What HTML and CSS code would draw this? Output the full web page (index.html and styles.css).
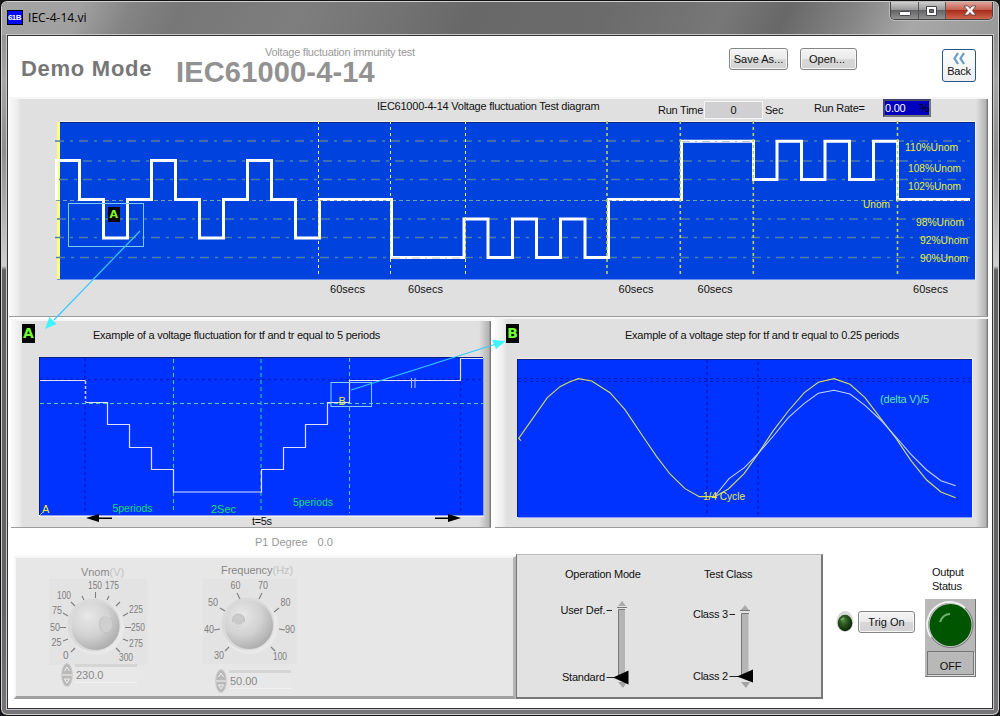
FILE: index.html
```html
<!DOCTYPE html>
<html lang="en">
<head>
<meta charset="utf-8">
<title>IEC-4-14.vi</title>
<link rel="stylesheet" href="styles.css">
</head>
<body>
<div class="window">
  <header class="titlebar">
    <span class="app-icon">61B</span>
    <span class="app-title">IEC-4-14.vi</span>
    <div class="window-buttons">
      <span class="wbtn"><svg width="28" height="18"><rect x="8.500" y="9.500" width="11" height="4" rx="1" fill="#fff" stroke="#454552"/></svg></span>
      <span class="wbtn restore"><svg width="26" height="18"><path d="M7.500 4.500h10v9h-10zM10.500 7.500h4v3h-4z" fill="#fff" stroke="#454552" fill-rule="evenodd"/></svg></span>
      <span class="wbtn close"><svg width="47" height="18"><path d="M18 4h4l2 2.500L26 4h4l-3.700 4.500L30 13h-4l-2-2.500L22 13h-4l3.700-4.500z" fill="#fff" stroke="#54434a" stroke-width=".8"/></svg></span>
    </div>
  </header>
  <main class="client">
    <section class="heading">
      <h1 class="demo">Demo Mode</h1>
      <div class="standard"><span class="subtitle">Voltage fluctuation immunity test</span><strong class="standard-name">IEC61000-4-14</strong></div>
      <button class="btn save">Save As...</button>
      <button class="btn open">Open...</button>
      <button class="back"><svg width="16" height="13"><path d="M7 1L3.500 6.500 7 12M13 1L9.500 6.500 13 12" fill="none" stroke="#6c9cca" stroke-width="2.300"/></svg><span>Back</span></button>
    </section>

    <section class="panel overview">
      <div class="overview-head">
        <span class="ov-title">IEC61000-4-14 Voltage fluctuation Test diagram</span>
        <span class="run-label">Run Time</span><span class="run-time">0</span><span class="sec">Sec</span>
        <span class="rate-label">Run Rate=</span><span class="rate">0.00<span class="pct">%</span></span>
      </div>
      <svg class="overview-chart" viewBox="50 120 930 180" width="930" height="180">
        <rect x="60" y="121" width="916" height="159" fill="#f2f2df"/>
        <rect x="57" y="122" width="3" height="157" fill="#ffff7c"/>
        <rect x="60" y="122" width="915" height="157" fill="#0042de"/>
        <path d="M60 122.500H975" stroke="#00258c"/>
        <path d="M57 279.500H975" stroke="#6b8ff0"/>
        <g stroke="#4f7fa6" stroke-width="1.300" stroke-dasharray="9 6 3 6">
          <path d="M55 141H970M59 161H970M59 179.500H970M57 219H970M55 237.500H970M56 257.500H970"/>
          <path d="M56 200.500H970" stroke-dasharray="4 3" stroke="#7ba39a" stroke-width="1"/>
        </g>
        <path class="wave" d="M56.500 200V160.500H79.500V199.500H103.500V238H127.500V199.500H151.500V160.500H175.500V199.500H199.500V238H223.500V199.500H247.500V160.500H271.500V199.500H295.500V238H319.500V199.500H391.500V257.500H464V219H488V257.500H512.500V219H536.500V257.500H560.500V219H585V257.500H608.500V199.500H681.500V141.300H753.500V179.500H777V141.300H801.500V179.500H825V141.300H849.500V179.500H873.500V141.300H897.500V199.500H970"/>
        <path d="M320 200.500H391M609 200.500H681M898 200.500H969" stroke="#9caea6" stroke-dasharray="3 4"/>
        <path d="M392 258H464M682 141.500H753" stroke="#b9c3c3" stroke-dasharray="8 5 2 5"/>
        <g stroke="#e8f04a" stroke-dasharray="3 3"><path d="M318.500 121V275M390.500 121V275M465.500 121V275"/><path d="M607 121V275M680.300 121V275M753.300 121V275M897.500 121V275" stroke="#c0d05c" stroke-width="1.600"/></g>
        <rect x="68.500" y="203.500" width="75" height="43" fill="none" stroke="#79cdf0"/>
        <rect x="108" y="207" width="12" height="15" fill="#000"/>
        <text x="109.500" y="218" class="marker">A</text>
        <g class="yellow">
          <text x="905" y="151" textLength="53" lengthAdjust="spacingAndGlyphs">110%Unom</text><text x="908" y="172" textLength="53" lengthAdjust="spacingAndGlyphs">108%Unom</text><text x="908" y="190" textLength="53" lengthAdjust="spacingAndGlyphs">102%Unom</text>
          <text x="863" y="208" textLength="27" lengthAdjust="spacingAndGlyphs">Unom</text>
          <text x="916" y="226" textLength="48" lengthAdjust="spacingAndGlyphs">98%Unom</text><text x="920" y="244" textLength="48" lengthAdjust="spacingAndGlyphs">92%Unom</text><text x="920" y="262" textLength="48" lengthAdjust="spacingAndGlyphs">90%Unom</text>
        </g>
        <g><text x="330" y="293" textLength="35">60secs</text><text x="408" y="293" textLength="35">60secs</text><text x="618.500" y="293" textLength="35">60secs</text><text x="697.500" y="293" textLength="35">60secs</text><text x="913" y="293" textLength="35">60secs</text></g>
      </svg>
    </section>

    <div class="examples">
      <section class="panel example-a">
        <div class="ex-head"><b class="badge">A</b><span class="ex-title a">Example of a voltage fluctuation for tf and tr equal to 5 periods</span></div>
        <svg class="chart-a" viewBox="38 356 448 172" width="448" height="172">
          <rect x="39" y="357" width="445" height="160" fill="#f3f1e8"/>
          <rect x="39" y="357" width="444" height="158" fill="#0033ff"/>
          <path d="M39.500 515V357.500H483" fill="none" stroke="#001d8c"/>
          <path d="M40 515.500H483.500V358" fill="none" stroke="#8ba0ff"/>
          <g stroke="#001bc4" stroke-width="1.400" stroke-dasharray="3 3"><path d="M40 379.500H483M85 358V513M460.500 358V513"/></g>
          <g stroke="#24df82" stroke-dasharray="4 3"><path d="M173.500 359V513M261 359V513"/><path d="M40 403.500H483M349.500 358V513" stroke="#4ccfa5"/></g>
          <path d="M40 380.500H85.500M85.500 402.500H107.500V424.500H129.500V447.500H151.500V469.500H173.500V492H261.500V469.500H283.500V447.500H305.500V424.500H327.500V402.500H349.500V380.500H460.500V358.500H483" fill="none" stroke="#dce2ff" stroke-width="1.200"/>
          <path d="M85.500 381V402" stroke="#c4ceff" stroke-width="1.600" stroke-dasharray="3 2"/>
          <path d="M411.500 378V388M415 378V388" stroke="#b9c8ff"/>
          <rect x="331" y="382.500" width="40.500" height="24" fill="none" stroke="#83cdf1"/>
          <text x="338.500" y="405" class="yellow">B</text><text x="42" y="513" class="yellow">A</text><path d="M40 515l4-4" stroke="#b7bf65"/>
          <g class="green"><text x="112.500" y="512" textLength="40" lengthAdjust="spacingAndGlyphs">5periods</text><text x="211" y="513" textLength="25">2Sec</text><text x="293" y="506" textLength="40" lengthAdjust="spacingAndGlyphs">5periods</text></g>
          <text x="252" y="525" textLength="20">t=5s</text>
          <path d="M86 518l13-4v3.500h13v1.500H99v3zM461 518l-13-4v3.500h-13v1.500h13v3z" fill="#000"/>
        </svg>
      </section>
      <section class="panel example-b">
        <div class="ex-head"><b class="badge">B</b><span class="ex-title b">Example of a voltage step for tf and tr equal to 0.25 periods</span></div>
        <svg class="chart-b" viewBox="516 358 457 161" width="457" height="161">
          <rect x="517" y="358" width="456" height="160" fill="#f3f1e8"/>
          <rect x="517" y="359" width="455" height="158" fill="#0033ff"/>
          <path d="M517.500 517V359.500H972" fill="none" stroke="#001d8c"/><path d="M518 517.500H972" stroke="#8ba0ff"/>
          <g stroke="#001bc4" stroke-dasharray="3 3"><path d="M518 378.500H971M518 381.500H971"/><path d="M707 360V514M758 362V517" stroke-width="1.500"/></g>
          <g transform="translate(510 340) scale(.33333)" fill="none" stroke-width="3.300">
            <path d="M33 302L26 295 112 173 150 140 178 126 205 116 245 123 300 158 345 209 400 291 440 350 480 402 525 446 568 470 615 470 655 447 703 400 745 340 790 272 835 213 883 158 925 127 972 116 1020 133 1065 173 1112 235 1158 295 1203 362 1250 420 1293 456 1337 473" stroke="#d5e056"/>
            <path d="M615 468L657 416 703 383 745 340 790 288 835 233 883 190 925 160 972 151 1020 162 1065 196 1112 240 1158 291 1203 343 1250 390 1293 422 1337 437" stroke="#c5d2ff"/>
          </g>
          <text x="703" y="500" class="yellow" textLength="42" lengthAdjust="spacingAndGlyphs">1/4 Cycle</text>
          <text x="880" y="403" class="delta" textLength="49">(delta V)/5</text>
        </svg>
      </section>
    </div>

    <p class="degree"><span>P1 Degree</span><span>0.0</span></p>

    <div class="bottom">
      <section class="panel-raised source">
        <div class="dial-group vnom">
          <h2 class="dial-title">Vnom<span>(V)</span></h2>
          <svg viewBox="49 578 98 86" width="98" height="86">
            <defs><radialGradient id="knob" cx=".35" cy=".3" r=".75"><stop offset="0" stop-color="#e8e8e8"/><stop offset=".55" stop-color="#d2d2d2"/><stop offset="1" stop-color="#acacac"/></radialGradient></defs>
            <rect x="49" y="578" width="98" height="86" fill="#e3e3e3"/>
            <circle cx="96" cy="626" r="28" fill="#e9e9e9"/><circle cx="94" cy="624" r="26.500" fill="#dadada"/><circle cx="95.500" cy="625" r="24" fill="url(#knob)"/>
            <ellipse cx="106" cy="623" rx="6.500" ry="9" fill="#cfcfcf" stroke="#c1c1c1"/><path d="M101 616q5-4 9 0" stroke="#e2e2e2" fill="none"/>
            <path d="M75 647l-4 4M68 638l-5 2M66 626.500h-6M68 615l-5-3M75 605l-4-4M84 599l-2-4M95.500 597v-6M107 599l2-4M116 605l4-4M123 615l5-3M125 626.500h6M123 638l5 2M116 647l4 4" stroke="#7d7d7d" stroke-width="1.100"/>
            <g class="tick"><text x="63" y="658">0</text><text x="51.500" y="645" textLength="10" lengthAdjust="spacingAndGlyphs">25</text><text x="50" y="630" textLength="10" lengthAdjust="spacingAndGlyphs">50</text><text x="52" y="613" textLength="10" lengthAdjust="spacingAndGlyphs">75</text><text x="57" y="598" textLength="14" lengthAdjust="spacingAndGlyphs">100</text><text x="88" y="588" textLength="14" lengthAdjust="spacingAndGlyphs">150</text><text x="105" y="588" textLength="14" lengthAdjust="spacingAndGlyphs">175</text><text x="129" y="612" textLength="14" lengthAdjust="spacingAndGlyphs">225</text><text x="131" y="630" textLength="14" lengthAdjust="spacingAndGlyphs">250</text><text x="129" y="646" textLength="14" lengthAdjust="spacingAndGlyphs">275</text><text x="119" y="660" textLength="14" lengthAdjust="spacingAndGlyphs">300</text></g>
          </svg>
          <div class="number"><svg class="spin" width="12" height="24"><ellipse cx="6" cy="12" rx="5.300" ry="11.500" fill="#b9b9b9" stroke="#ccc"/><path d="M3.500 8l2.500-4 2.500 4M3.500 16l2.500 4 2.500-4zM1 12h10" fill="none" stroke="#f2f2f2"/></svg><span class="value">230.0</span></div>
        </div>
        <div class="dial-group freq">
          <h2 class="dial-title">Frequency<span>(Hz)</span></h2>
          <svg viewBox="203 579 94 85" width="94" height="85">
            <rect x="203" y="579" width="94" height="85" fill="#e3e3e3"/>
            <circle cx="250" cy="626" r="28" fill="#e9e9e9"/><circle cx="248" cy="624" r="26.500" fill="#dadada"/><circle cx="249" cy="625" r="24" fill="url(#knob)"/>
            <circle cx="238.500" cy="620" r="6" fill="#cacaca" stroke="#bebebe"/><path d="M233 622a6 6 0 0011 0" fill="none" stroke="#dedede" stroke-width="1.500"/>
            <path d="M229 647l-4 4M220 629l-6 1M225 611l-5-3M240 599l-3-6M259 599l3-6M274 612l5-4M279 629l6 1M271 647l4 4" stroke="#7d7d7d" stroke-width="1.100"/>
            <g class="tick"><text x="214" y="659" textLength="10" lengthAdjust="spacingAndGlyphs">30</text><text x="204" y="633" textLength="10" lengthAdjust="spacingAndGlyphs">40</text><text x="208" y="606" textLength="10" lengthAdjust="spacingAndGlyphs">50</text><text x="230.500" y="589" textLength="10" lengthAdjust="spacingAndGlyphs">60</text><text x="258" y="589" textLength="10" lengthAdjust="spacingAndGlyphs">70</text><text x="280.500" y="606" textLength="10" lengthAdjust="spacingAndGlyphs">80</text><text x="285" y="633" textLength="10" lengthAdjust="spacingAndGlyphs">90</text><text x="273" y="660" textLength="14" lengthAdjust="spacingAndGlyphs">100</text></g>
          </svg>
          <div class="number"><svg class="spin" width="12" height="24"><ellipse cx="6" cy="12" rx="5.300" ry="11.500" fill="#b9b9b9" stroke="#ccc"/><path d="M3.500 8l2.500-4 2.500 4M3.500 16l2.500 4 2.500-4zM1 12h10" fill="none" stroke="#f2f2f2"/></svg><span class="value">50.00</span></div>
        </div>
      </section>
      <section class="panel-raised modes">
        <div class="mode operation">
          <h2 class="mode-title">Operation Mode</h2>
          <svg viewBox="558 594 78 96" width="78" height="96">
            <text x="560.500" y="614" textLength="45">User Def.</text><text x="562" y="681" textLength="43">Standard</text>
            <path d="M606.500 610.500H612M606.500 677.500H614" stroke="#222"/>
            <path d="M622 601l4 5h-8z" fill="#aaa"/><path d="M617 607.500h10" stroke="#777"/><rect x="618.500" y="609" width="6.500" height="66" fill="#b5b5b5"/><path d="M618.500 675V609.500H625" fill="none" stroke="#777"/>
            <path d="M618 682h9l-4 6z" fill="#a3a3a3"/><path d="M613 677.500l15.500-7v14z" fill="#000"/>
          </svg>
        </div>
        <div class="mode class">
          <h2 class="mode-title">Test Class</h2>
          <svg viewBox="690 594 70 96" width="70" height="96">
            <text x="693" y="618" textLength="35">Class 3</text><text x="693" y="680" textLength="35">Class 2</text>
            <path d="M729.500 614.500H735M729.500 676.500H738" stroke="#222"/>
            <path d="M745 605l4 5h-8z" fill="#aaa"/><path d="M740 610.500h10" stroke="#777"/><rect x="741.500" y="613" width="7" height="62" fill="#b5b5b5"/><path d="M741.500 675V613.500H749" fill="none" stroke="#777"/>
            <path d="M741 682h9l-4 6z" fill="#a3a3a3"/><path d="M737 676.500l16-7v13z" fill="#000"/>
          </svg>
        </div>
      </section>
      <div class="trigger"><svg width="18" height="24" viewBox="0 0 18 24"><defs><radialGradient id="led" cx=".4" cy=".35" r=".7"><stop offset="0" stop-color="#518a43"/><stop offset=".45" stop-color="#25501a"/><stop offset="1" stop-color="#0b2105"/></radialGradient></defs><ellipse cx="9" cy="11.500" rx="8.500" ry="10.500" fill="#d9d9d9"/><ellipse cx="9" cy="13" rx="7.300" ry="8.300" fill="url(#led)"/><path d="M5 10l3-2" stroke="#8fb888" stroke-width="1.500"/></svg><button class="btn trig">Trig On</button></div>
      <div class="output"><div class="output-label">Output<br>Status</div>
        <div class="lamp"><svg width="48" height="49" viewBox="0 0 48 49"><circle cx="24.500" cy="25" r="22.500" fill="#c2c2c2" stroke="#777"/><path d="M5 37A22.500 22.500 0 0139 8" fill="none" stroke="#f0f0f0" stroke-width="2"/><circle cx="24.500" cy="25" r="21" fill="#005600"/><path d="M14 22q3-8 10-8" fill="none" stroke="#72b276" stroke-width="2"/></svg><span class="off">OFF</span></div>
      </div>
    </div>
  </main>
  <svg class="callouts" width="1000" height="716"><path d="M140 231L54 320M351 390L496 344" stroke="#35caff" fill="none" stroke-width="1.200"/><path d="M45 329l4.500-12 7 7zM506 341l-14-1 4 9z" fill="#3ff4ff"/></svg>
</div>
</body>
</html>
```
FILE: styles.css
```css
* { box-sizing: border-box; }
body { margin: 0; width: 1000px; height: 716px; overflow: hidden; background: #17171b; font: 11px "Liberation Sans", Arial, sans-serif; letter-spacing: -.24px; color: #111; }
h1, h2, p { margin: 0; font-weight: 400; font-size: 11px; }
svg { display: block; flex: none; letter-spacing: 0; }
svg text { font-size: 11px; fill: #111; }
span, h1, h2, b { white-space: nowrap; }
.window { position: relative; width: 1000px; height: 716px; padding: 1px 6px 6px; border: 1px solid #111; border-radius: 7px; background: linear-gradient(180deg, #858585 0, #a6a6a6 80px, #8e8e8e 150px, #d0d0d0 265px, #626262 269px, #636365 600px, #77757a 100%); box-shadow: inset 0 0 0 1px #cfcfcf; }
.titlebar { display: flex; align-items: flex-start; height: 33px; margin: 0 -5px; border-radius: 5px 5px 0 0; background: linear-gradient(115deg, #a4a4a4 0, #a0a0a0 8%, #848484 13%, #777 18%, #7e7e7e 30%, #727272 40%, #686868 47%, #6b6b6b 60%, #777 72%, #686868 78%, #858585 85%, #a8a8a8 91%, #999 100%); }
.app-icon { width: 16px; height: 15px; margin: 8px 0 0 5px; border: 1px solid #000; background: #0008ff; color: #fff; font-size: 8px; line-height: 14px; font-weight: 700; letter-spacing: -.6px; }
.app-title { margin: 8px 0 0 5px; font: 12px/16px "Open Sans", sans-serif; letter-spacing: .05px; color: #000; }
.window-buttons { display: flex; height: 18px; margin: 0 5px 0 auto; border: 1px solid #444; border-top: 0; border-radius: 0 0 5px 5px; overflow: hidden; box-shadow: 0 0 0 1px #bbb; }
.wbtn { width: 28px; background: linear-gradient(#cdcdcd, #999 45%, #646464 50%, #929292); border-right: 1px solid #555; }
.restore { width: 27px; }
.close { border: 0; width: 46px; background: linear-gradient(#dfa49b, #c6604f 45%, #a82e1a 50%, #d0654d); }
.client { height: 674px; background: #fff; border: 1px solid #333; padding-left: 1px; box-shadow: 0 0 0 1px #c8c8c8; }
.heading { display: flex; height: 61px; align-items: flex-start; }
.demo { margin: 19px 0 0 12px; width: 155px; font-weight: 700; font-size: 22px; line-height: 28px; letter-spacing: .72px; color: #777; }
.standard { display: flex; flex-direction: column; width: 553px; padding-top: 10px; }
.subtitle { margin-left: 89px; line-height: 13px; color: #999; }
.standard-name { line-height: 27px; font-size: 29px; letter-spacing: .17px; color: #929292; }
.btn { padding: 0; height: 22px; border: 1px solid #858585; border-radius: 3px; background: linear-gradient(#f5f5f5 0, #eaeaea 48%, #d8d8d8 52%, #d2d2d2); box-shadow: inset 0 0 0 1px #f7f7f7; font: 11px "Liberation Sans", sans-serif; color: #111; }
.save { width: 59px; margin-top: 12px; }
.open { width: 57px; margin: 12px 0 0 12px; padding-right: 3px; }
.back { display: flex; flex-direction: column; align-items: center; width: 34px; height: 33px; padding: 2px 0 0; margin: 13px 0 0 85px; border: 1px solid #24588e; border-radius: 3px; background: linear-gradient(#fff, #eee); font: 11px/13px "Liberation Sans", sans-serif; letter-spacing: -.2px; color: #111; }
.panel { background: linear-gradient(90deg, #fafafa 0, #ededed 8px, #e0e0e0 12px, #e0e0e0 calc(100% - 12px), #b2b2b2 calc(100% - 2px), #666 100%); border-bottom: 1px solid #9c9c9c; border-top: 2px solid #f6f6f6; }
.overview { width: 979px; height: 220px; }
.overview-head { display: flex; height: 21px; align-items: flex-start; line-height: 13px; }
.ov-title { width: 281px; margin-left: 368px; margin-top: 1px; }
.run-label { width: 46px; margin-top: 5px; }
.run-time { width: 59px; height: 18px; margin-top: 2px; border: 1px solid #f5f5f5; background: #d0d0d2; text-align: center; line-height: 17px; }
.sec { width: 49px; margin: 5px 0 0 2px; }
.rate-label { width: 69px; margin-top: 3px; }
.rate { display: flex; justify-content: space-between; width: 48px; height: 18px; border: 2px solid #777; border-top-color: #446; border-left-color: #446; background: #0000be; color: #fff; line-height: 14px; }
.pct { color: #000; }
.overview-chart { margin-left: 41px; }
.examples { display: flex; height: 211px; }
.example-a { width: 480px; height: 209px; margin: 2px 4px 0 2px; }
.example-b { width: 493px; height: 211px; }
.ex-head { display: flex; height: 35px; padding-top: 3px; align-items: flex-start; }
.badge { width: 13px; height: 19px; margin-left: 11px; background: #050505; color: #72ff35; text-align: center; font: 700 14px/19px "DejaVu Sans", sans-serif; letter-spacing: 0; }
.example-b .badge { margin-top: 2px; }
.ex-title { margin-top: 5px; line-height: 13px; }
.ex-title.a { margin-left: 58px; }
.ex-title.b { margin: 7px 0 0 106px; }
.chart-a { margin-left: 27px; }
.example-b .ex-head { height: 39px; }
.chart-b { margin-left: 21px; }
.degree { display: flex; gap: 10px; height: 26px; padding: 7px 0 0 246px; line-height: 14px; letter-spacing: 0; color: #989898; }
.bottom { display: flex; height: 145px; }
.panel-raised { display: flex; align-items: flex-start; border: solid; border-width: 2px 3px 3px 2px; border-color: #f5f5f5 #b4b4b4 #a0a0a0 #f8f8f8; }
.source { width: 502px; height: 143px; margin: 2px 0 0 5px; background: #e7e7e7; }
.modes { width: 307px; height: 145px; border-width: 1px 2px 2px 1px; border-color: #bbb #777 #777 #777; background: #e2e2e2; }
.dial-group { display: flex; flex-direction: column; color: #888; }
.vnom { width: 98px; margin: 7px 0 0 33px; }
.freq { width: 94px; margin: 5px 0 0 56px; }
.dial-title { height: 14px; line-height: 14px; padding-left: 32px; color: #888; letter-spacing: -.05px; }
.freq .dial-title { height: 16px; padding-left: 18px; }
.dial-title span { color: #c3c3c3; }
.tick text { fill: #808080; font-size: 10px; }
.number { display: flex; margin: -2px 0 0 12px; letter-spacing: -.05px; }
.freq .number { margin: 5px 0 0 12px; }
.value { width: 62px; height: 19px; margin: 1px 0 0 2px; padding-left: 1px; border-top: 3px solid #d5d5d5; border-bottom: 1px solid #f2f2f2; background: #e8e8e8; line-height: 17px; }
.operation { width: 78px; margin: 13px 0 0 41px; }
.class { width: 70px; margin: 13px 0 0 54px; }
.mode-title { height: 26px; line-height: 13px; padding-left: 7px; }
.class .mode-title { padding-left: 14px; }
.trigger { display: flex; gap: 4px; margin: 56px 0 0 13px; }
.trig { width: 57px; height: 22px; margin-top: 1px; }
.output { width: 51px; margin: 12px 0 0 10px; }
.output-label { height: 33px; padding-left: 7px; line-height: 13.5px; }
.lamp { width: 51px; height: 78px; padding: 1px; border-right: 1px solid #777; border-bottom: 1px solid #777; background: #b8b8b8; }
.off { display: block; width: 47px; height: 24px; margin: 2px 0 0 1px; border: 1px solid #777; box-shadow: 1px 1px #ddd; text-align: center; line-height: 28px; }
.yellow, .yellow text, svg .yellow { fill: #e9ef35; }
.green text { fill: #13df6c; }
svg .delta { fill: #59e5ac; }
svg .marker { font: 700 11px "DejaVu Sans", sans-serif; fill: #7fff2a; }
.wave { fill: none; stroke: #fff; stroke-width: 3; }
.callouts { position: absolute; left: -1px; top: -1px; pointer-events: none; }
```
